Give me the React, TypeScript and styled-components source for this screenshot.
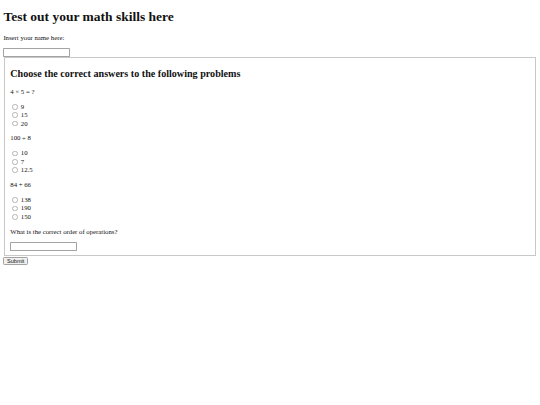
import React from "react";
import styled, { createGlobalStyle } from "styled-components";

// the reference is a 1280px page shown at 540px
const SCALE = 540 / 1280;

const GlobalStyle = createGlobalStyle`
  html, body {
    margin: 0;
    padding: 0;
    background: #fff;
  }
`;

const Page = styled.div`
  zoom: ${SCALE};
  padding: 8px;
  font-family: "Liberation Serif", "Times New Roman", serif;
  font-size: 16px;
  color: #111;
  display: flow-root;
`;

const Title = styled.h1`
  font-size: 32px;
  line-height: 37px;
  font-weight: bold;
  margin: 13.44px 0 21.44px;
`;

const Form = styled.form`
  margin: 0;
`;

const Prompt = styled.p`
  margin: 16px 0;
  line-height: 18.4px;
`;

const TextField = styled.input`
  display: block;
  box-sizing: border-box;
  font-family: "Liberation Sans", Arial, sans-serif;
  font-size: 13.33px;
  padding: 1px 2px;
  border: 1px solid #a3a3a3;
  border-radius: 2px;
  width: 157px;
  height: 21px;
  margin: 0;
  background: #fff;
`;

const Quiz = styled.fieldset`
  margin: 0 2px;
  padding: 5.6px 12px 10px;
  border: 2px groove #c8c8c8;
  min-width: min-content;
`;

const QuizHeading = styled.h2`
  font-size: 24px;
  line-height: 27.6px;
  font-weight: bold;
  margin: 17.5px 0 19.92px;
`;

const Question = styled.p`
  margin: 16px 0;
  line-height: 18.4px;
`;

const Choice = styled.label`
  display: flex;
  align-items: center;
  height: 20px;
  line-height: 18.4px;
`;

const Radio = styled.input`
  appearance: none;
  box-sizing: border-box;
  width: 13px;
  height: 13px;
  border: 1px solid #b4b4b4;
  border-radius: 50%;
  background: #fff;
  margin: 1px 7px 0 5px;
`;

const SubmitButton = styled.button`
  display: block;
  box-sizing: border-box;
  height: 21px;
  margin-top: 1px;
  font-family: "Liberation Sans", Arial, sans-serif;
  font-size: 13.33px;
  padding: 1px 6px;
  border: 1px solid #a3a3a3;
  border-radius: 3px;
  background: #f0f0f0;
  color: #111;
`;

interface Problem {
  id: string;
  question: string;
  options: string[];
}

const problems: Problem[] = [
  { id: "q1", question: "4 × 5 = ?", options: ["9", "15", "20"] },
  { id: "q2", question: "100 ÷ 8", options: ["10", "7", "12.5"] },
  { id: "q3", question: "84 + 66", options: ["138", "190", "150"] },
];

const App: React.FC = () => {
  return (
    <>
      <GlobalStyle />
      <Page>
        <Title>Test out your math skills here</Title>
        <Form onSubmit={(e) => e.preventDefault()}>
          <Prompt>Insert your name here:</Prompt>
          <TextField type="text" name="name" />
          <Quiz>
            <QuizHeading>Choose the correct answers to the following problems</QuizHeading>
            {problems.map((p) => (
              <React.Fragment key={p.id}>
                <Question>{p.question}</Question>
                {p.options.map((o) => (
                  <Choice key={o}>
                    <Radio type="radio" name={p.id} value={o} />
                    {o}
                  </Choice>
                ))}
              </React.Fragment>
            ))}
            <Question>What is the correct order of operations?</Question>
            <TextField type="text" name="order" />
          </Quiz>
          <SubmitButton type="submit">Submit</SubmitButton>
        </Form>
      </Page>
    </>
  );
};

export default App;
